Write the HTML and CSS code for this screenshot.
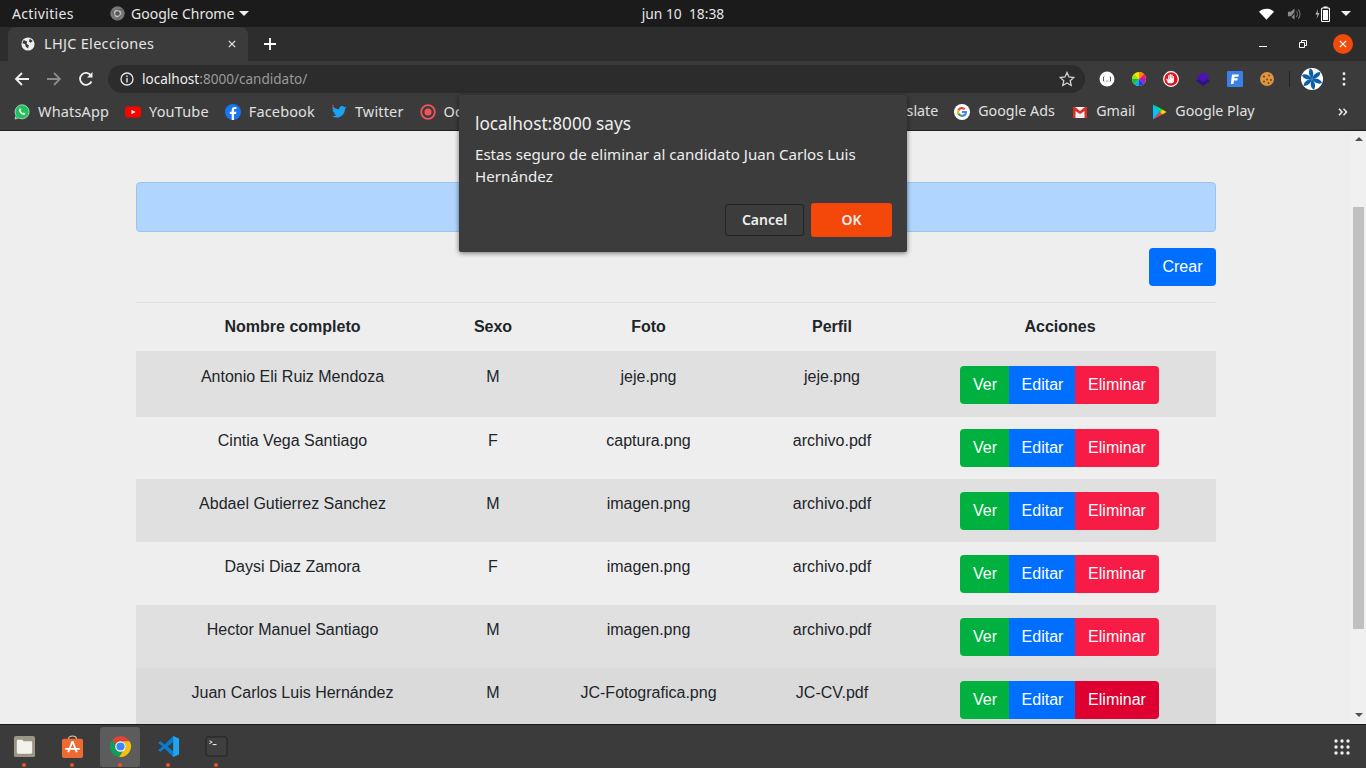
FILE: index.html
```html
<!DOCTYPE html>
<html lang="es">

<head>
    <meta charset="UTF-8">
    <meta name="viewport" content="width=device-width, initial-scale=1.0">
    <title>LHJC Elecciones</title>
    <link rel="stylesheet" href="styles.css">
</head>

<body>

    <!-- desktop top bar -->
    <div class="topbar">
        <div class="topbar-left">
            <span class="activities">Activities</span>
            <span class="app-menu">
                <svg class="app-icon" viewBox="0 0 24 24"><circle cx="12" cy="12" r="11.5" fill="#777"/><circle cx="12" cy="12" r="6" fill="#bbb"/><circle cx="12" cy="12" r="3.6" fill="#555"/><path d="M12 6h10M7 15 2 6M17 15l-6 8" stroke="#555" stroke-width="1.4"/></svg>
                Google Chrome
                <span class="caret"></span>
            </span>
        </div>
        <div class="clock">jun 10&nbsp;&nbsp;18:38</div>
        <div class="topbar-right">
            <svg class="tray-wifi" viewBox="0 0 16 12"><path d="M0 3.6C4.4-.6 11.6-.6 16 3.6L8 12z" fill="#fff"/></svg>
            <svg class="tray-sound" viewBox="0 0 16 14"><path d="M1 4.5h3L8 1v12L4 9.500H1z" fill="#8a8a8a"/><path d="M10 4c1.400 1.600 1.400 4.400 0 6M12 2c2.600 2.800 2.600 7.200 0 10" fill="none" stroke="#777" stroke-width="1.100"/><path d="M2 13 12 1" stroke="#222" stroke-width="1.200"/></svg>
            <svg class="tray-battery" viewBox="0 0 15 16"><path d="M3 3 .5 8.500h2L1.500 13 4.500 7h-2z" fill="#bbb"/><rect x="6.500" y="2" width="8" height="13.500" rx="1" fill="none" stroke="#fff" stroke-width="1.100"/><rect x="8.500" y="0.500" width="4" height="1.500" fill="#fff"/><rect x="8" y="4" width="5" height="10" fill="#fff"/></svg>
            <span class="caret caret-tray"></span>
        </div>
    </div>

    <!-- browser tabs -->
    <div class="tabstrip">
        <div class="tab">
            <svg class="tab-icon" viewBox="0 0 16 16"><circle cx="8" cy="8" r="7.500" fill="#eee"/><path d="M3 3.500 7 5 6.500 8 9 9.500 8 13 5.500 11 4.500 8 1.500 7zM10 2l3.500 2.500L11 6.500 9 5z" fill="#3c3c3c"/></svg>
            <span class="tab-title">LHJC Elecciones</span>
            <svg class="tab-close" viewBox="0 0 10 10"><path d="M1 1l8 8M9 1 1 9" stroke="#e8e8e8" stroke-width="1.500"/></svg>
        </div>
        <svg class="tab-new" viewBox="0 0 12 12"><path d="M6 0v12M0 6h12" stroke="#fff" stroke-width="1.800"/></svg>
        <div class="window-controls">
            <span class="win-min"></span>
            <svg class="win-restore" viewBox="0 0 8 8"><path d="M.5 2.500h5v5h-5zM2.500 2.500v-2h5v5h-2" fill="none" stroke="#fff"/></svg>
            <span class="win-close">
                <svg viewBox="0 0 10 10"><path d="M1 1l8 8M9 1 1 9" stroke="#fff" stroke-width="1.500"/></svg>
            </span>
        </div>
    </div>

    <!-- address bar -->
    <div class="toolbar">
        <svg class="nav-btn" viewBox="0 0 16 16"><path d="M15 8H2M8 2 2 8l6 6" fill="none" stroke="#f0f0f0" stroke-width="1.800"/></svg>
        <svg class="nav-btn" viewBox="0 0 16 16"><path d="M1 8h13M8 2l6 6-6 6" fill="none" stroke="#8a8a8a" stroke-width="1.800"/></svg>
        <svg class="nav-btn" viewBox="0 0 16 16"><path d="M13.500 10.500A6 6 0 1 1 13 4.500" fill="none" stroke="#f0f0f0" stroke-width="1.800"/><path d="M14.500 1v5.500H9z" fill="#f0f0f0"/></svg>
        <div class="omnibox">
            <svg class="omni-info" viewBox="0 0 14 14"><circle cx="7" cy="7" r="6" fill="none" stroke="#e8e8e8" stroke-width="1.300"/><path d="M7 6v4.500M7 3.500v1.400" stroke="#e8e8e8" stroke-width="1.400"/></svg>
            <span class="omni-url"><span class="omni-host">localhost</span>:8000/candidato/</span>
            <svg class="omni-star" viewBox="0 0 16 16"><path d="M8 1.500 10 6l4.800.5-3.600 3.200 1 4.800L8 12l-4.200 2.500 1-4.800L1.200 6.500 6 6z" fill="none" stroke="#d0d0d0" stroke-width="1.300"/></svg>
        </div>
        <div class="extensions">
            <svg class="ext" viewBox="0 0 16 16"><circle cx="8" cy="8" r="7.500" fill="#fff"/><path d="M5 5.500C4 6 5 8 4 8c1 0 0 2 1 2.500M11 5.500C12 6 11 8 12 8c-1 0 0 2-1 2.500" fill="none" stroke="#333"/><path d="M7 10h.6M8.600 10h.6" stroke="#333"/></svg>
            <svg class="ext" viewBox="0 0 16 16"><circle cx="8" cy="8" r="7" fill="#ffe600"/><path d="M8 8V1a7 7 0 0 1 5 2z" fill="#ff8a00"/><path d="M8 8l5-5a7 7 0 0 1 2 5z" fill="#f0148c"/><path d="M8 8h7a7 7 0 0 1-2 5z" fill="#a020d0"/><path d="M8 8l5 5a7 7 0 0 1-5 2z" fill="#2040e0"/><path d="M8 8v7a7 7 0 0 1-5-2z" fill="#10b0e0"/><path d="M8 8l-5 5a7 7 0 0 1-2-5z" fill="#10c040"/><path d="M8 8H1a7 7 0 0 1 2-5z" fill="#a0e010"/></svg>
            <svg class="ext" viewBox="0 0 16 16"><circle cx="8" cy="8" r="7.300" fill="#e8101c" stroke="#fff" stroke-width="1.200"/><path d="M5 12 3 8l1-.4 1.200 1.500V4.200h1.100v3.300h.4V3h1.200v4.500h.4V3.600h1.200v3.900h.4V5h1.100v5c0 1.200-.9 2.200-2.100 2.200H6.500c-.6 0-1.100-.1-1.500-.2z" fill="#fff"/></svg>
            <svg class="ext" viewBox="0 0 16 16"><path d="M8 5 15 10 8 15 1 10z" fill="#2c1580"/><path d="M8 1 15 6 8 11 1 6z" fill="#4b14b0"/></svg>
            <svg class="ext" viewBox="0 0 16 16"><rect width="16" height="16" rx="1" fill="#3a80e8"/><path d="M5 3.500h7l-.6 2.300H7.500l-.2 1.500h3.500L10.300 9.500H7l-.5 3.500H3.800z" fill="#fff"/></svg>
            <svg class="ext" viewBox="0 0 16 16"><circle cx="8" cy="8" r="7" fill="#dd9440"/><circle cx="5" cy="5.500" r="1.100" fill="#7a4416"/><circle cx="10" cy="4.500" r=".9" fill="#7a4416"/><circle cx="8" cy="8.500" r="1" fill="#7a4416"/><circle cx="12" cy="9" r="1" fill="#7a4416"/><circle cx="5" cy="10.500" r="1" fill="#7a4416"/><circle cx="9.500" cy="12" r=".9" fill="#7a4416"/></svg>
        </div>
        <span class="toolbar-sep"></span>
        <svg class="avatar" viewBox="0 0 22 22"><circle cx="11" cy="11" r="11" fill="#fff"/><g fill="#0b5fa8"><path d="M11 11C8 8 7 4 9 .5c3 .5 4.500 6 2 10.500z"/><path d="M11 11C8 8 7 4 9 .5c3 .5 4.500 6 2 10.500z" transform="rotate(60 11 11)"/><path d="M11 11C8 8 7 4 9 .5c3 .5 4.500 6 2 10.500z" transform="rotate(120 11 11)"/><path d="M11 11C8 8 7 4 9 .5c3 .5 4.500 6 2 10.500z" transform="rotate(180 11 11)"/><path d="M11 11C8 8 7 4 9 .5c3 .5 4.500 6 2 10.500z" transform="rotate(240 11 11)"/><path d="M11 11C8 8 7 4 9 .5c3 .5 4.500 6 2 10.500z" transform="rotate(300 11 11)"/></g></svg>
        <svg class="menu-dots" viewBox="0 0 4 16"><circle cx="2" cy="2" r="1.600" fill="#eee"/><circle cx="2" cy="8" r="1.600" fill="#eee"/><circle cx="2" cy="14" r="1.600" fill="#eee"/></svg>
    </div>

    <!-- bookmarks -->
    <div class="bookmarks">
        <span class="bm">
            <svg viewBox="0 0 16 16"><path d="M1 15l1-3.700A7 7 0 1 1 4.800 14z" fill="#1fc35b" stroke="#fff" stroke-width=".6"/><path d="M5.500 4.500c-1 1-.8 2.800.8 4.600 1.700 1.800 3.500 2.300 4.700 1.400l.5-1-1.900-1-.8.800C7.800 8.700 7 7.800 6.600 6.800l.7-.7-.8-1.800z" fill="#fff"/></svg>
            WhatsApp
        </span>
        <span class="bm">
            <svg viewBox="0 0 16 16"><rect y="2.500" width="16" height="11" rx="3" fill="#f00"/><path d="M6.500 5.700v4.600L10.500 8z" fill="#fff"/></svg>
            YouTube
        </span>
        <span class="bm">
            <svg viewBox="0 0 16 16"><circle cx="8" cy="8" r="8" fill="#1877f2"/><path d="M9 16v-6h2l.4-2.300H9V6.300c0-.7.300-1.200 1.200-1.200h1.200v-2L9.800 3C8 3 6.700 4 6.700 6v1.700H4.800V10h1.900v6z" fill="#fff"/></svg>
            Facebook
        </span>
        <span class="bm">
            <svg viewBox="0 0 16 16"><path d="M15.500 3.500c-.6.300-1.100.4-1.700.5.600-.4 1.100-.9 1.300-1.600-.6.300-1.200.6-1.900.7A3 3 0 0 0 8 5.300C5.600 5.200 3.400 4 1.900 2.200c-.8 1.400-.4 3.100.9 4-.5 0-.9-.1-1.300-.4 0 1.500 1 2.700 2.400 3-.4.1-.9.100-1.300 0 .4 1.200 1.500 2 2.800 2.100A6 6 0 0 1 1 12.200 8.500 8.500 0 0 0 14 4.800c.6-.3 1.100-.8 1.500-1.300z" fill="#1da1f2"/><circle cx="2" cy="1.500" r="1" fill="#e0245e"/></svg>
            Twitter
        </span>
        <span class="bm">
            <svg viewBox="0 0 16 16"><circle cx="8" cy="8" r="6.800" fill="none" stroke="#f2545b" stroke-width="1.800"/><circle cx="8" cy="8" r="3.600" fill="#f2545b"/></svg>
            Oc
        </span>
        <span class="bm bm-narrow bm-translate">Google Translate</span>
        <span class="bm bm-narrow">
            <svg viewBox="0 0 16 16"><circle cx="8" cy="8" r="8" fill="#fff"/><path d="M13 8.300c0 2.800-2 4.700-5 4.700V10.800c1.500 0 2.400-.8 2.700-1.700H8V7h4.900z" fill="#4285f4"/><path d="M3.500 5.700A5 5 0 0 1 11.500 4.500L10 6A3 3 0 0 0 5.300 7z" fill="#ea4335"/><path d="M3.500 5.700 5.300 7a3 3 0 0 0 0 2L3.500 10.300a5 5 0 0 1 0-4.600z" fill="#fbbc05"/><path d="M3.500 10.300 5.300 9A3 3 0 0 0 8 10.800V13a5 5 0 0 1-4.500-2.700z" fill="#34a853"/></svg>
            Google Ads
        </span>
        <span class="bm bm-narrow bm-gmail">
            <svg viewBox="0 0 16 16"><rect x="1" y="3" width="14" height="11" fill="#eee"/><path d="M1 3h2l5 4 5-4h2v11h-2.500V7L8 10 3.500 7v7H1z" fill="#d93025"/></svg>
            Gmail
        </span>
        <span class="bm bm-narrow">
            <svg viewBox="0 0 16 16"><path d="M2 0.500v15L9 8z" fill="#00c4ff"/><path d="M2 0.500 9 8l2.500-2.500z" fill="#00e676"/><path d="M2 15.500 9 8l2.500 2.500z" fill="#ff3a44"/><path d="M11.500 5.500 15.500 8l-4 2.500L9 8z" fill="#ffd500"/></svg>
            Google Play
        </span>
        <svg class="bm-more" viewBox="0 0 10 8"><path d="M1 .8 4 4 1 7.200M5.500.8 8.500 4 5.500 7.200" fill="none" stroke="#eee" stroke-width="1.500"/></svg>
    </div>

    <!-- page content -->
    <div class="viewport">
        <div class="page">
            <div class="content">
                <div class="alert"></div>
                <div class="actions-top">
                    <button class="btn btn-blue btn-crear" type="button">Crear</button>
                </div>
                <table class="table">
                    <thead>
                        <tr>
                            <th class="col-name">Nombre completo</th>
                            <th class="col-sex">Sexo</th>
                            <th class="col-photo">Foto</th>
                            <th class="col-file">Perfil</th>
                            <th class="col-actions">Acciones</th>
                        </tr>
                    </thead>
                    <tbody>
                        <tr>
                            <td>Antonio Eli Ruiz Mendoza</td>
                            <td>M</td>
                            <td>jeje.png</td>
                            <td>jeje.png</td>
                            <td class="cell-actions">
                                <div class="btn-group"><button class="btn btn-green">Ver</button><button class="btn btn-blue">Editar</button><button class="btn btn-red">Eliminar</button></div>
                            </td>
                        </tr>
                        <tr>
                            <td>Cintia Vega Santiago</td>
                            <td>F</td>
                            <td>captura.png</td>
                            <td>archivo.pdf</td>
                            <td class="cell-actions">
                                <div class="btn-group"><button class="btn btn-green">Ver</button><button class="btn btn-blue">Editar</button><button class="btn btn-red">Eliminar</button></div>
                            </td>
                        </tr>
                        <tr>
                            <td>Abdael Gutierrez Sanchez</td>
                            <td>M</td>
                            <td>imagen.png</td>
                            <td>archivo.pdf</td>
                            <td class="cell-actions">
                                <div class="btn-group"><button class="btn btn-green">Ver</button><button class="btn btn-blue">Editar</button><button class="btn btn-red">Eliminar</button></div>
                            </td>
                        </tr>
                        <tr>
                            <td>Daysi Diaz Zamora</td>
                            <td>F</td>
                            <td>imagen.png</td>
                            <td>archivo.pdf</td>
                            <td class="cell-actions">
                                <div class="btn-group"><button class="btn btn-green">Ver</button><button class="btn btn-blue">Editar</button><button class="btn btn-red">Eliminar</button></div>
                            </td>
                        </tr>
                        <tr>
                            <td>Hector Manuel Santiago</td>
                            <td>M</td>
                            <td>imagen.png</td>
                            <td>archivo.pdf</td>
                            <td class="cell-actions">
                                <div class="btn-group"><button class="btn btn-green">Ver</button><button class="btn btn-blue">Editar</button><button class="btn btn-red">Eliminar</button></div>
                            </td>
                        </tr>
                        <tr class="row-hover">
                            <td>Juan Carlos Luis Hernández</td>
                            <td>M</td>
                            <td>JC-Fotografica.png</td>
                            <td>JC-CV.pdf</td>
                            <td class="cell-actions">
                                <div class="btn-group"><button class="btn btn-green">Ver</button><button class="btn btn-blue">Editar</button><button class="btn btn-red-dark">Eliminar</button></div>
                            </td>
                        </tr>
                    </tbody>
                </table>
            </div>
        </div>
        <div class="scrollbar">
            <span class="arrow-up"></span>
            <span class="thumb"></span>
            <span class="arrow-down"></span>
        </div>
    </div>

    <!-- dock -->
    <div class="dock">
        <div class="dock-item">
            <svg viewBox="0 0 24 24"><rect x="1" y="1" width="22" height="22" rx="2" fill="#9c9686"/><path d="M4 6.500C4 5.500 4.500 5 5.500 5h4l1.500 1.500h7.500c1 0 1.500.5 1.500 1.500v10c0 1-.5 1.500-1.500 1.500h-13C4.500 19.500 4 19 4 18z" fill="#f4f2ec"/></svg>
            <span class="dock-dot"></span>
        </div>
        <div class="dock-item">
            <svg viewBox="0 0 24 24"><path d="M8 5V3.500C8 2 9.500 1 12 1s4 1 4 2.500V5" fill="none" stroke="#e0c8a8" stroke-width="1.200"/><rect x="1" y="4" width="22" height="20" rx="2" fill="#ee6a32"/><path d="M12 6.500 7.500 18M12 6.500 16.500 18M4.500 14.500h15" stroke="#fff" stroke-width="2" fill="none"/></svg>
            <span class="dock-dot"></span>
        </div>
        <div class="dock-item dock-active">
            <svg viewBox="0 0 24 24"><path d="M3.400 5.100A11 11 0 0 1 21.500 6.500H12a5.500 5.500 0 0 0-5.200 3.800z" fill="#db4437"/><path d="M3.400 5.100A11 11 0 0 0 10.500 22.900l4.100-6A5.500 5.500 0 0 1 6.800 10.300z" fill="#0f9d58"/><path d="M21.500 6.500H12a5.500 5.500 0 0 1 2.700 10.300l-4.200 6.100A11 11 0 0 0 21.500 6.500z" fill="#f4c20d"/><circle cx="12" cy="12" r="5.500" fill="#fff"/><circle cx="12" cy="12" r="4.300" fill="#4285f4"/></svg>
            <span class="dock-dot"></span>
        </div>
        <div class="dock-item">
            <svg viewBox="0 0 24 24"><path d="M17 1 8 10 3.500 6.500 1 8l5 4-5 4 2.500 1.500L8 14l9 9 6-3V4zm0 6v10l-6-5z" fill="#0a7cd0"/><path d="M17 1l6 3v16l-6 3z" fill="#22a3ee"/></svg>
            <span class="dock-dot"></span>
        </div>
        <div class="dock-item">
            <svg viewBox="0 0 24 24"><rect x="1" y="2" width="22" height="20" rx="2.500" fill="#3f3f3f" stroke="#222"/><path d="M4.500 6 7.500 7.500 4.500 9" fill="none" stroke="#fff" stroke-width=".9"/><path d="M8 10h4" stroke="#fff"/></svg>
            <span class="dock-dot"></span>
        </div>
        <svg class="dock-grid" viewBox="0 0 16 16"><g fill="#eee"><circle cx="2" cy="2" r="1.700"/><circle cx="8" cy="2" r="1.700"/><circle cx="14" cy="2" r="1.700"/><circle cx="2" cy="8" r="1.700"/><circle cx="8" cy="8" r="1.700"/><circle cx="14" cy="8" r="1.700"/><circle cx="2" cy="14" r="1.700"/><circle cx="8" cy="14" r="1.700"/><circle cx="14" cy="14" r="1.700"/></g></svg>
    </div>

    <!-- confirm dialog -->
    <div class="dialog">
        <div class="dialog-title">localhost:8000 says</div>
        <div class="dialog-msg">Estas seguro de eliminar al candidato Juan Carlos Luis Hernández</div>
        <div class="dialog-btns">
            <button class="dlg-cancel" type="button">Cancel</button>
            <button class="dlg-ok" type="button">OK</button>
        </div>
    </div>

</body>

</html>
```

FILE: styles.css
```css
* {
    box-sizing: border-box;
}

html,
body {
    margin: 0;
    height: 768px;
    overflow: hidden;
}

body {
    display: flex;
    flex-direction: column;
    font-family: "Noto Sans", sans-serif;
    background: #eee;
}

svg {
    display: block;
    flex-shrink: 0;
}

/* top bar */
.topbar {
    height: 27px;
    background: #1b1b1b;
    color: #e6e6e6;
    display: grid;
    grid-template-columns: 1fr auto 1fr;
    align-items: center;
    font-size: 14px;
}

.topbar-left {
    display: flex;
    align-items: center;
    padding-left: 12px;
}

.activities {
    width: 98px;
    letter-spacing: 0.35px;
}

.app-menu {
    display: flex;
    align-items: center;
}

.app-icon {
    width: 15px;
    height: 15px;
    margin-right: 6px;
}

.caret {
    width: 0;
    height: 0;
    border-left: 5px solid transparent;
    border-right: 5px solid transparent;
    border-top: 5px solid #eee;
    margin-left: 5px;
}

.clock {
    color: #e6e6e6;
    font-size: 13.8px;
    white-space: nowrap;
}

.topbar-right {
    display: flex;
    align-items: center;
    justify-content: flex-end;
    padding-right: 15px;
}

.tray-wifi {
    width: 15px;
    height: 12px;
}

.tray-sound {
    width: 15px;
    height: 14px;
    margin-left: 13px;
}

.tray-battery {
    width: 15px;
    height: 16px;
    margin-left: 13px;
}

.caret-tray {
    margin-left: 11px;
}

/* tabs */
.tabstrip {
    height: 34px;
    background: #2d2d2d;
    display: flex;
    align-items: flex-end;
    padding-left: 8px;
}

.tab {
    width: 240px;
    height: 34px;
    background: #3b3b3b;
    border-radius: 8px 8px 0 0;
    display: flex;
    align-items: center;
    padding-left: 13px;
    color: #e4e4e4;
    font-size: 14.5px;
    letter-spacing: 0.3px;
}

.tab-icon {
    width: 14px;
    height: 14px;
    margin-right: 9px;
}

.tab-title {
    flex: 1;
    padding-bottom: 2px;
}

.tab-close {
    width: 8px;
    height: 8px;
    margin-right: 12px;
}

.tab-new {
    width: 12px;
    height: 12px;
    margin: 0 0 11px 16px;
}

.window-controls {
    margin-left: auto;
    display: flex;
    align-items: center;
    height: 34px;
    padding-right: 13px;
}

.win-min {
    width: 8px;
    height: 1px;
    background: #fff;
    margin-top: 4px;
}

.win-restore {
    width: 8px;
    height: 8px;
    margin-left: 32px;
}

.win-close {
    width: 20px;
    height: 20px;
    border-radius: 50%;
    background: #f04a0c;
    margin-left: 26px;
    display: flex;
    align-items: center;
    justify-content: center;
}

.win-close svg {
    width: 8px;
    height: 8px;
}

/* toolbar */
.toolbar {
    height: 35px;
    background: #3b3b3b;
    display: flex;
    align-items: center;
    padding-left: 14px;
}

.nav-btn {
    width: 16px;
    height: 16px;
    margin-right: 16px;
}

.omnibox {
    width: 977px;
    height: 28px;
    margin-left: -2px;
    border-radius: 14px;
    background: #2c2c2c;
    display: flex;
    align-items: center;
    padding-left: 12px;
    padding-right: 10px;
    font-size: 13.55px;
    color: #9a9a9a;
}

.omni-info {
    width: 14px;
    height: 14px;
    margin-right: 8px;
}

.omni-host {
    color: #eee;
}

.omni-star {
    width: 16px;
    height: 16px;
    margin-left: auto;
}

.extensions {
    display: flex;
    gap: 16px;
    margin-left: 14px;
}

.ext {
    width: 16px;
    height: 16px;
}

.toolbar-sep {
    width: 1px;
    height: 16px;
    background: #222;
    margin-left: 14px;
}

.avatar {
    width: 22px;
    height: 22px;
    margin-left: 11px;
}

.menu-dots {
    width: 4px;
    height: 14px;
    margin-left: 19px;
}

/* bookmarks */
.bookmarks {
    height: 35px;
    background: #3b3b3b;
    border-bottom: 1px solid #1f1f1f;
    display: flex;
    align-items: center;
    gap: 16px;
    padding: 0 0 5px 14px;
    color: #e0e0e0;
    font-size: 14.5px;
    letter-spacing: 0.15px;
}

.bm {
    display: flex;
    align-items: center;
    gap: 8px;
    white-space: nowrap;
}

.bm svg {
    width: 16px;
    height: 16px;
    margin-top: 2px;
}

.bm-narrow {
    font-size: 14.25px;
    letter-spacing: 0;
}

.bm-translate {
    margin-left: 347px;
}

.bm-gmail {
    margin-left: 1.5px;
}

.bm-more {
    width: 10px;
    height: 8px;
    margin: 2px 18px 0 auto;
}

/* page */
.viewport {
    flex: 1;
    display: flex;
    min-height: 0;
    overflow: hidden;
    background: #eee;
    border-bottom: 1px solid #1a1a1a;
}

.page {
    flex: 1;
    overflow: hidden;
    padding: 51px 0 0 136px;
    font-family: "Liberation Sans", Arial, sans-serif;
    color: #212529;
    font-size: 16px;
}

.content {
    width: 1080px;
}

.alert {
    height: 50px;
    background: #b0d6ff;
    border: 1px solid #9cc3ec;
    border-radius: 4px;
    margin-bottom: 16px;
}

.actions-top {
    display: flex;
    justify-content: flex-end;
    margin-bottom: 16px;
}

.btn {
    height: 38px;
    padding: 6px 12px;
    border: 1px solid transparent;
    font-family: inherit;
    font-size: 16px;
    line-height: 24px;
    color: #fff;
    border-radius: 4px;
}

.btn-crear {
    width: 67px;
}

.btn-blue {
    background: #006fff;
}

.btn-green {
    background: #00b140;
}

.btn-red {
    background: #f61c45;
}

.btn-red-dark {
    background: #dd0031;
}

.btn-group {
    display: flex;
    justify-content: center;
    padding-right: 1px;
}

.btn-group .btn {
    border-radius: 0;
    margin-left: -1px;
    padding: 0;
}

.btn-group .btn:nth-child(1) {
    width: 50px;
    margin-left: 0;
    border-radius: 4px 0 0 4px;
}

.btn-group .btn:nth-child(2) {
    width: 67px;
}

.btn-group .btn:nth-child(3) {
    width: 84px;
    border-radius: 0 4px 4px 0;
}

/* table */
.table {
    width: 1080px;
    border-collapse: collapse;
    table-layout: fixed;
    text-align: center;
}

.table th {
    height: 48px;
    padding: 0;
    border-top: 1px solid #dee2e6;
    vertical-align: middle;
}

.col-name {
    width: 313px;
}

.col-sex {
    width: 88px;
}

.col-photo {
    width: 223px;
}

.col-file {
    width: 144px;
}

/* row offsets are not even in the reference */
.table td {
    padding: 16px 0 0;
    vertical-align: top;
    height: 63px;
}

.table td.cell-actions {
    padding-top: 13px;
}

.table tbody tr:first-child td {
    padding-top: 17px;
    height: 66px;
}

.table tbody tr:first-child td.cell-actions {
    padding-top: 15px;
}

.table tbody tr:nth-child(2) td {
    padding-top: 15px;
    height: 62px;
}

.table tbody tr:nth-child(2) td.cell-actions {
    padding-top: 12px;
}

.table tbody tr:nth-child(odd) {
    background: #e0e0e0;
}

.table tbody tr.row-hover {
    background: #dadada;
}

/* scrollbar */
.scrollbar {
    width: 15px;
    background: #f0f0f0;
    display: flex;
    flex-direction: column;
    align-items: center;
    position: relative;
    padding-top: 76px;
}

.thumb {
    width: 11px;
    height: 422px;
    background: #c0c0c0;
}

.arrow-up,
.arrow-down {
    position: absolute;
    width: 0;
    height: 0;
    border-left: 4px solid transparent;
    border-right: 4px solid transparent;
}

.arrow-up {
    top: 6px;
    border-bottom: 4px solid #505050;
}

.arrow-down {
    bottom: 7px;
    border-top: 4px solid #505050;
}

/* dock */
.dock {
    height: 43px;
    background: #3b3b3b;
    display: flex;
    align-items: center;
    padding-left: 0;
}

.dock-item {
    width: 40px;
    height: 40px;
    margin: 0 4px;
    border-radius: 3px;
    display: flex;
    align-items: center;
    justify-content: center;
    position: relative;
}

.dock-item svg {
    width: 23px;
    height: 23px;
}

.dock-active {
    background: #5c5c5c;
}

.dock-dot {
    position: absolute;
    left: 18px;
    bottom: 0;
    width: 4px;
    height: 4px;
    border-radius: 50%;
    background: #e95420;
}

.dock-grid {
    width: 16px;
    height: 16px;
    margin-left: auto;
    margin-right: 16px;
}

/* dialog */
.dialog {
    position: absolute;
    left: 459px;
    top: 95px;
    width: 448px;
    height: 157px;
    background: #3c3c3c;
    border-radius: 2px;
    box-shadow: 0 1px 5px rgba(0, 0, 0, 0.55);
    padding: 17px 15px 15px 16px;
    color: #eee;
    font-size: 15.1px;
}

.dialog-title {
    font-size: 17.2px;
    line-height: 24px;
    margin-bottom: 7px;
}

.dialog-msg {
    line-height: 22px;
    width: 400px;
}

.dialog-btns {
    display: flex;
    justify-content: flex-end;
    align-items: center;
    gap: 7px;
    margin-top: 16px;
}

.dialog-btns button {
    font-family: "Noto Sans", sans-serif;
    font-size: 14px;
    font-weight: 600;
    color: #eee;
    border-radius: 3px;
    padding: 0 0 2px;
}

.dlg-cancel {
    width: 79px;
    height: 32px;
    background: #3c3c3c;
    border: 1px solid #222;
}

.dlg-ok {
    width: 81px;
    height: 34px;
    background: #f4470a;
    border: 0;
}
```
